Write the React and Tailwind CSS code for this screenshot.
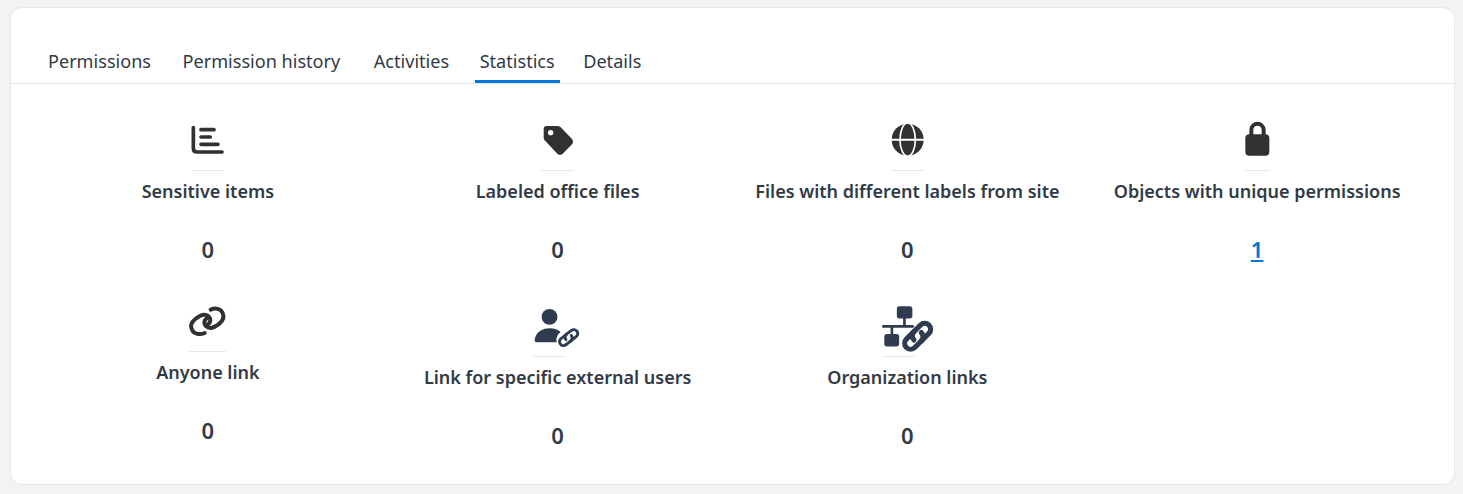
const dark = "#323130";
const navy = "#2f3b4f";

const BarsIcon = () => (
  <svg viewBox="66 24 96 141" width="32" height="47" className="overflow-visible">
    <path d="M70 38V100Q70 111 81 111H156" fill="none" stroke={dark} strokeWidth="11" strokeLinecap="round" />
    <path d="M93 44H132M93 66H121M93 88H144" fill="none" stroke={dark} strokeWidth="11" strokeLinecap="round" />
  </svg>
);

const TagIcon = () => (
  <svg viewBox="63 24 99 141" width="33" height="47" className="overflow-visible">
    <path
      fillRule="evenodd"
      fill={dark}
      d="M80 33H112Q118 33 122 37L156 72Q162 80 156 88L128 116Q120 123 112 116L76 78Q71 74 71 68V42Q71 33 80 33ZM92 45A8 8 0 1 0 92 61A8 8 0 1 0 92 45Z"
    />
  </svg>
);

const GlobeIcon = () => (
  <svg viewBox="63 24 99 141" width="33" height="47" className="overflow-visible">
    <circle cx="113" cy="74" r="48" fill={dark} />
    <ellipse cx="113" cy="74" rx="23" ry="50" fill="none" stroke="#fff" strokeWidth="5" />
    <path d="M60 74H166" stroke="#fff" strokeWidth="6" />
  </svg>
);

const LockIcon = () => (
  <svg viewBox="75 24 75 141" width="25" height="47" className="overflow-visible">
    <path d="M94 62V46C94 20 131 20 131 46V62" fill="none" stroke={dark} strokeWidth="12" />
    <rect x="76" y="58" width="72" height="64" rx="12" fill={dark} />
  </svg>
);

const LinkIcon = () => (
  <svg viewBox="57 30 111 138" width="37" height="46" className="overflow-visible">
    <g fill="none" stroke={dark} strokeWidth="12" strokeLinecap="round">
      <path d="M104 114C90 120 72 118 66 104C60 92 66 80 76 72C88 62 104 54 116 64C124 72 122 82 114 88" />
      <path d="M122 44C136 38 152 40 158 54C164 68 158 78 148 86C136 96 120 104 108 94C100 86 102 76 110 70" />
    </g>
  </svg>
);

// two interlocked links, drawn around 0,0 and placed with a transform
const Chain = ({ transform, width }) => (
  <g transform={transform} fill="none" stroke={navy} strokeWidth={width} strokeLinecap="round">
    <path d="M0.5-3.2H-5.4A3.2 3.2 0 0 0-5.4 3.2H-0.4A3.2 3.2 0 0 0 2.8 0" />
    <path d="M-0.5 3.2H5.4A3.2 3.2 0 0 0 5.4-3.2H0.4A3.2 3.2 0 0 0-2.8 0" />
  </g>
);

const UserLinkIcon = () => (
  <svg viewBox="38 30 100 153" width="33" height="51" className="overflow-visible">
    <circle cx="88" cy="65" r="24" fill={navy} />
    <path d="M50 142Q40 142 44 130C50 110 68 100 88 100C103 100 115 105 122 112C112 118 107 130 110 142Z" fill={navy} />
    <Chain transform="translate(146 128) rotate(-38) scale(3.7)" width="2.4" />
  </svg>
);

const OrgLinkIcon = () => (
  <svg viewBox="38 30 100 153" width="33" height="51" className="overflow-visible">
    <g fill={navy}>
      <rect x="83" y="33" width="47" height="37" rx="8" />
      <rect x="102" y="68" width="8" height="24" />
      <rect x="38" y="90" width="97" height="8" rx="4" />
      <rect x="64" y="96" width="8" height="24" />
      <rect x="45" y="117" width="45" height="38" rx="8" />
    </g>
    <Chain transform="translate(146 124) rotate(-45) scale(5.6)" width="2.8" />
  </svg>
);

const tabs = [
  { label: "Permissions", gap: "" },
  { label: "Permission history", gap: "ml-[21.5px]" },
  { label: "Activities", gap: "ml-[23.5px]" },
  { label: "Statistics", gap: "ml-[20.5px]" },
  { label: "Details", gap: "ml-[18.5px]" },
];

const stats = [
  { icon: <BarsIcon />, label: "Sensitive items", value: "0" },
  { icon: <TagIcon />, label: "Labeled office files", value: "0" },
  { icon: <GlobeIcon />, label: "Files with different labels from site", value: "0" },
  { icon: <LockIcon />, label: "Objects with unique permissions", value: "1", link: true },
  { icon: <LinkIcon />, label: "Anyone link", value: "0" },
  { icon: <UserLinkIcon />, label: "Link for specific external users", value: "0", wide: true },
  { icon: <OrgLinkIcon />, label: "Organization links", value: "0", wide: true },
];

const StatCard = ({ icon, label, value, link, wide }) => (
  <div className="flex flex-col items-center">
    <div className={`flex border-b border-[#e6e7e8] ${wide ? "mr-[17px]" : ""}`}>{icon}</div>
    <div className="mt-2 text-[18px] leading-6 font-semibold text-[#323a45]">{label}</div>
    <div className="mt-[34px] text-[22px] leading-6 font-semibold">
      {link ? (
        <a href="#" className="text-[#0078d4] underline">
          {value}
        </a>
      ) : (
        <span className="text-[#323a45]">{value}</span>
      )}
    </div>
  </div>
);

export default function App() {
  return (
    <div className="h-[494px] bg-[#f2f3f5] pt-[7px] pl-[10px] pr-[8px] font-['Noto_Sans','Open_Sans',sans-serif]">
      <div className="h-[478px] rounded-xl border border-[#e6e7e9] bg-white">
        <div className="flex border-b border-[#e4e6e8] pt-[41px] pl-[32px]">
          {tabs.map((tab) => (
            <div
              key={tab.label}
              className={`border-b-[3px] px-[5px] pb-[7px] text-[18.1px] leading-6 text-[#323a45] ${tab.gap} ${
                tab.label === "Statistics" ? "border-[#0078d4]" : "border-transparent"
              }`}
            >
              {tab.label}
            </div>
          ))}
        </div>
        <div className="grid grid-cols-4 gap-y-[44px] px-[22px] pt-[39px]">
          {stats.map((s) => (
            <StatCard key={s.label} {...s} />
          ))}
        </div>
      </div>
    </div>
  );
}
